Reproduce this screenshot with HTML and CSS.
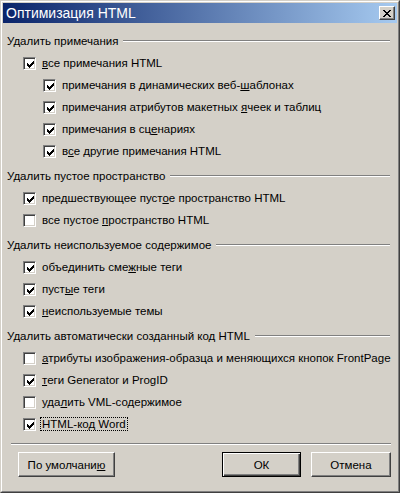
FILE: index.html
```html
<!DOCTYPE html>
<html lang="ru">
<head>
    <meta charset="UTF-8">
    <title>Оптимизация HTML</title>
    <link rel="stylesheet" href="styles.css">
</head>
<body>
    <div class="window">
        <div class="frame">
            <div class="titlebar">
                <span class="title">Оптимизация HTML</span>
                <span class="close-btn">
                    <svg width="8" height="7" viewBox="0 0 8 7" shape-rendering="crispEdges"><path d="M0 0h2v1H0z M6 0h2v1H6z M1 1h2v1H1z M5 1h2v1H5z M2 2h4v1H2z M3 3h2v1H3z M2 4h4v1H2z M1 5h2v1H1z M5 5h2v1H5z M0 6h2v1H0z M6 6h2v1H6z" fill="#000"/></svg>
                </span>
            </div>

            <div class="content">
                <div class="group first">
                    <div class="group-head"><span>Удалить примечания</span><span class="rule"></span></div>
                    <div class="row"><span class="box on"><svg width="7" height="7" viewBox="0 0 7 7" shape-rendering="crispEdges"><path d="M0 2h1v3H0z M1 3h1v3H1z M2 4h1v3H2z M3 3h1v3H3z M4 2h1v3H4z M5 1h1v3H5z M6 0h1v3H6z"/></svg></span><span class="text"><u>в</u>се примечания HTML</span></div>
                    <div class="row sub"><span class="box on"><svg width="7" height="7" viewBox="0 0 7 7" shape-rendering="crispEdges"><path d="M0 2h1v3H0z M1 3h1v3H1z M2 4h1v3H2z M3 3h1v3H3z M4 2h1v3H4z M5 1h1v3H5z M6 0h1v3H6z"/></svg></span><span class="text">примечания в динамических веб-<u>ш</u>аблонах</span></div>
                    <div class="row sub"><span class="box on"><svg width="7" height="7" viewBox="0 0 7 7" shape-rendering="crispEdges"><path d="M0 2h1v3H0z M1 3h1v3H1z M2 4h1v3H2z M3 3h1v3H3z M4 2h1v3H4z M5 1h1v3H5z M6 0h1v3H6z"/></svg></span><span class="text">примечания атрибутов макетных <u>я</u>чеек и таблиц</span></div>
                    <div class="row sub"><span class="box on"><svg width="7" height="7" viewBox="0 0 7 7" shape-rendering="crispEdges"><path d="M0 2h1v3H0z M1 3h1v3H1z M2 4h1v3H2z M3 3h1v3H3z M4 2h1v3H4z M5 1h1v3H5z M6 0h1v3H6z"/></svg></span><span class="text">примечания в сц<u>е</u>нариях</span></div>
                    <div class="row sub"><span class="box on"><svg width="7" height="7" viewBox="0 0 7 7" shape-rendering="crispEdges"><path d="M0 2h1v3H0z M1 3h1v3H1z M2 4h1v3H2z M3 3h1v3H3z M4 2h1v3H4z M5 1h1v3H5z M6 0h1v3H6z"/></svg></span><span class="text">в<u>с</u>е другие примечания HTML</span></div>
                </div>

                <div class="group">
                    <div class="group-head"><span>Удалить пустое пространство</span><span class="rule"></span></div>
                    <div class="row"><span class="box on"><svg width="7" height="7" viewBox="0 0 7 7" shape-rendering="crispEdges"><path d="M0 2h1v3H0z M1 3h1v3H1z M2 4h1v3H2z M3 3h1v3H3z M4 2h1v3H4z M5 1h1v3H5z M6 0h1v3H6z"/></svg></span><span class="text">предшествующее пуст<u>о</u>е пространство HTML</span></div>
                    <div class="row"><span class="box"></span><span class="text">все пустое <u>п</u>ространство HTML</span></div>
                </div>

                <div class="group">
                    <div class="group-head"><span>Удалить неиспользуемое содержимое</span><span class="rule"></span></div>
                    <div class="row"><span class="box on"><svg width="7" height="7" viewBox="0 0 7 7" shape-rendering="crispEdges"><path d="M0 2h1v3H0z M1 3h1v3H1z M2 4h1v3H2z M3 3h1v3H3z M4 2h1v3H4z M5 1h1v3H5z M6 0h1v3H6z"/></svg></span><span class="text">объединить сме<u>ж</u>ные теги</span></div>
                    <div class="row"><span class="box on"><svg width="7" height="7" viewBox="0 0 7 7" shape-rendering="crispEdges"><path d="M0 2h1v3H0z M1 3h1v3H1z M2 4h1v3H2z M3 3h1v3H3z M4 2h1v3H4z M5 1h1v3H5z M6 0h1v3H6z"/></svg></span><span class="text">пуст<u>ы</u>е теги</span></div>
                    <div class="row"><span class="box on"><svg width="7" height="7" viewBox="0 0 7 7" shape-rendering="crispEdges"><path d="M0 2h1v3H0z M1 3h1v3H1z M2 4h1v3H2z M3 3h1v3H3z M4 2h1v3H4z M5 1h1v3H5z M6 0h1v3H6z"/></svg></span><span class="text"><u>н</u>еиспользуемые темы</span></div>
                </div>

                <div class="group">
                    <div class="group-head"><span>Удалить автоматически созданный код HTML</span><span class="rule"></span></div>
                    <div class="row"><span class="box"></span><span class="text"><u>а</u>трибуты изображения-образца и меняющихся кнопок FrontPage</span></div>
                    <div class="row"><span class="box on"><svg width="7" height="7" viewBox="0 0 7 7" shape-rendering="crispEdges"><path d="M0 2h1v3H0z M1 3h1v3H1z M2 4h1v3H2z M3 3h1v3H3z M4 2h1v3H4z M5 1h1v3H5z M6 0h1v3H6z"/></svg></span><span class="text"><u>т</u>еги Generator и ProgID</span></div>
                    <div class="row"><span class="box"></span><span class="text">уда<u>л</u>ить VML-содержимое</span></div>
                    <div class="row"><span class="box on"><svg width="7" height="7" viewBox="0 0 7 7" shape-rendering="crispEdges"><path d="M0 2h1v3H0z M1 3h1v3H1z M2 4h1v3H2z M3 3h1v3H3z M4 2h1v3H4z M5 1h1v3H5z M6 0h1v3H6z"/></svg></span><span class="text focus">HTML-код Word</span></div>
                </div>

                <div class="separator"></div>

                <div class="buttons">
                    <span class="btn wide">По умолчани<u>ю</u></span>
                    <span class="btn-group">
                        <span class="btn default">ОК</span>
                        <span class="btn">Отмена</span>
                    </span>
                </div>
            </div>
        </div>
    </div>
</body>
</html>
```

FILE: styles.css
```css
html, body {
    margin: 0;
    padding: 0;
}
body {
    font-family: 'Liberation Sans', Arial, sans-serif;
    font-size: 11.5px;
    color: #000;
    background: #d4d0c8;
}
.window {
    width: 400px;
    height: 493px;
    box-sizing: border-box;
    border: 1px solid;
    border-color: #d4d0c8 #404040 #404040 #d4d0c8;
}
.frame {
    height: 100%;
    box-sizing: border-box;
    border: 1px solid;
    border-color: #fff #808080 #808080 #fff;
    padding: 1px;
    background: #d4d0c8;
    display: flex;
    flex-direction: column;
}
.titlebar {
    height: 20px;
    display: flex;
    align-items: center;
    justify-content: space-between;
    padding: 0 2px 0 3px;
    background: linear-gradient(to right, #0a246a, #a6caf0);
}
.title {
    color: #fff;
    font-size: 14px;
}
.close-btn {
    width: 16px;
    height: 14px;
    box-sizing: border-box;
    display: flex;
    align-items: center;
    justify-content: center;
    background: #d4d0c8;
    border: 1px solid;
    border-color: #fff #404040 #404040 #fff;
    box-shadow: inset -1px -1px 0 #808080;
}
.content {
    padding: 7px 4px 0 4px;
}
.group {
    margin-top: 3px;
}
.group.first {
    margin-top: 0;
}
.group-head {
    height: 22px;
    display: flex;
    align-items: center;
    padding-right: 3px;
    white-space: nowrap;
}
.rule {
    flex: 1;
    margin-left: 5px;
    border-top: 1px solid #808080;
    border-bottom: 1px solid #fff;
}
.row {
    height: 22px;
    display: flex;
    align-items: center;
    padding-left: 16px;
    white-space: nowrap;
}
.row.sub {
    padding-left: 36px;
}
.box {
    width: 13px;
    height: 13px;
    box-sizing: border-box;
    border: 1px solid;
    border-color: #808080 #fff #fff #808080;
    box-shadow: inset 1px 1px 0 #404040, inset -1px -1px 0 #d4d0c8;
    background: #fff;
    padding: 3px 0 0 3px;
    margin-right: 4px;
    flex: none;
}
.box svg {
    display: block;
}
.text {
    padding: 0 1px;
    border: 1px solid transparent;
}
.text.focus {
    border: 1px dotted #000;
}
.separator {
    margin: 8px 2px 0 4px;
    border-top: 1px solid #808080;
    border-bottom: 1px solid #fff;
}
.buttons {
    display: flex;
    justify-content: space-between;
    padding: 7px 2px 0 11px;
}
.btn-group {
    display: flex;
    gap: 10px;
}
.btn {
    width: 80px;
    height: 25px;
    box-sizing: border-box;
    display: flex;
    align-items: center;
    justify-content: center;
    border: 1px solid;
    border-color: #fff #404040 #404040 #fff;
    box-shadow: inset -1px -1px 0 #808080;
}
.btn.wide {
    width: 97px;
}
.btn.default {
    width: 79px;
    border: 1px solid #000;
    box-shadow: inset 1px 1px 0 #fff, inset -1px -1px 0 #404040, inset -2px -2px 0 #808080;
}
```
